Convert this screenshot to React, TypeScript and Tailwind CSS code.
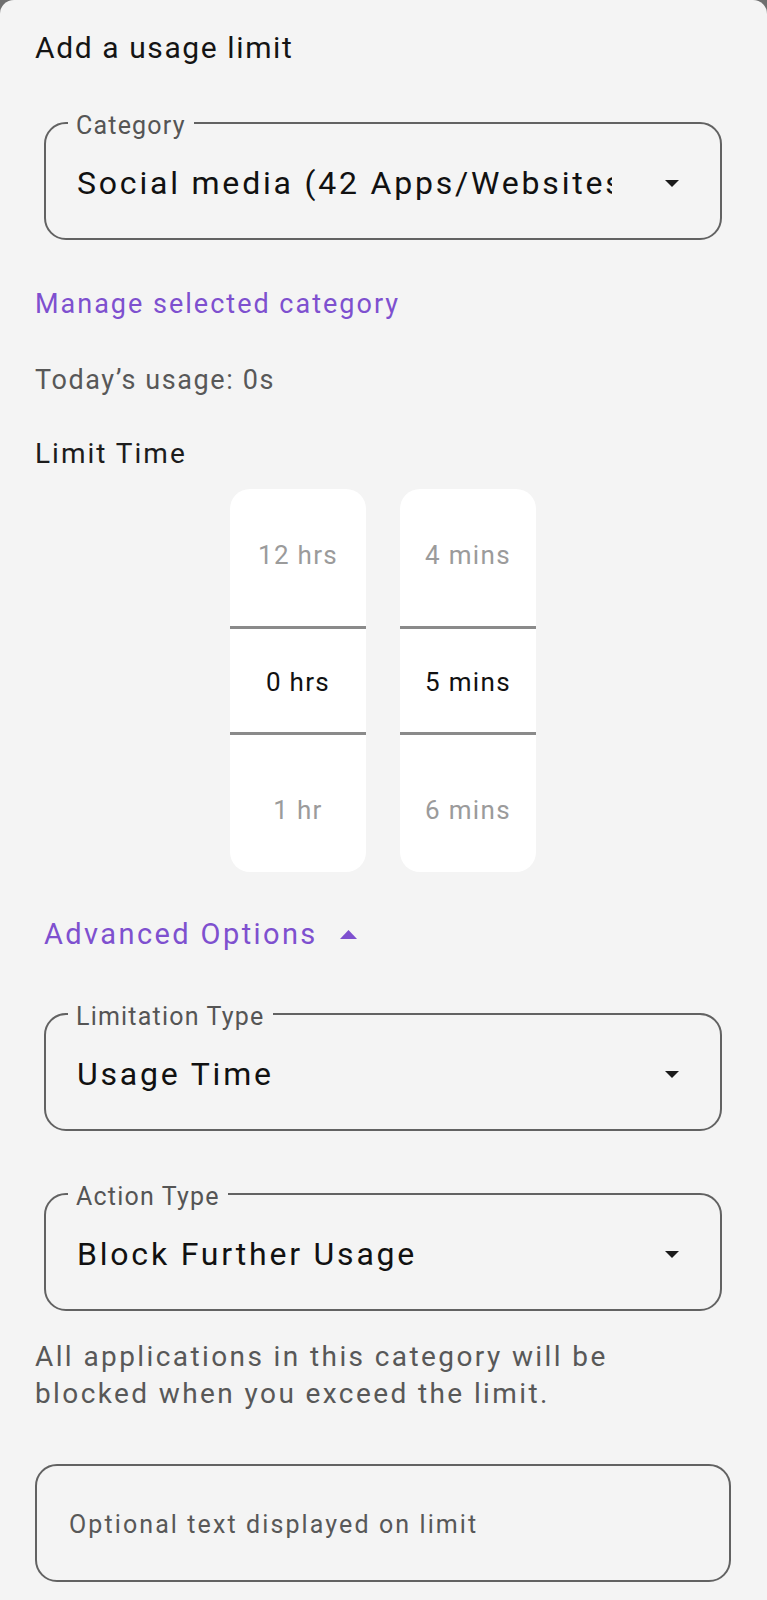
import React from 'react';

const FONT = { fontFamily: 'Roboto, "Noto Sans", sans-serif' };

function DownArrow() {
  return (
    <svg width="14" height="7" viewBox="0 0 14 7" className="shrink-0">
      <polygon points="0,0 14,0 7,7" fill="#1a1a1a" />
    </svg>
  );
}

function SelectField({ label, value }: { label: string; value: string }) {
  return (
    <div className="relative mx-[9px] h-[118px] rounded-[22px] border-2 border-[#626262]">
      <span className="absolute left-[22px] top-[2px] -translate-y-1/2 bg-[#f4f4f4] px-[8px] text-[25px] leading-[30px] tracking-[1.2px] text-[#555555]">
        {label}
      </span>
      <div className="flex h-full items-center pl-[31px] pr-[41px] pt-[4px]">
        <div className="mr-[53px] flex-1 overflow-hidden whitespace-nowrap text-[32px] leading-[40px] tracking-[2.8px] text-[#111111]">
          {value}
        </div>
        <DownArrow />
      </div>
    </div>
  );
}

function Wheel({ top, mid, bottom }: { top: string; mid: string; bottom: string }) {
  return (
    <div className="flex h-[383px] w-[136px] flex-col overflow-hidden rounded-[20px] bg-white text-[26px] tracking-[1.3px]">
      <div className="flex h-[137px] items-center justify-center pb-[5px] text-[#9b9b9b]">{top}</div>
      <div className="h-[3px] bg-[#8a8a8a]" />
      <div className="flex h-[103px] items-center justify-center pt-[3px] text-[#111111]">{mid}</div>
      <div className="h-[3px] bg-[#8a8a8a]" />
      <div className="flex h-[137px] items-center justify-center pt-[13px] text-[#9b9b9b]">{bottom}</div>
    </div>
  );
}

export default function App() {
  return (
    <div className="min-h-[1600px] bg-[#6f6f6f]" style={FONT}>
      <div className="min-h-[1600px] rounded-t-[14px] bg-[#f4f4f4] pl-[35px] pr-[36px] pt-[28px]">
        <h1 className="h-[40px] text-[30px] leading-[40px] tracking-[1.6px] text-[#141414]">Add a usage limit</h1>

        <div className="mt-[54px]">
          <SelectField label="Category" value="Social media (42 Apps/Websites)" />
        </div>

        <button className="mt-[46px] block h-[36px] text-[27px] leading-[36px] tracking-[2px] text-[#7e50cf]">
          Manage selected category
        </button>

        <p className="mt-[40px] h-[36px] text-[27px] leading-[36px] tracking-[1.6px] text-[#585858]">
          Today’s usage: 0s
        </p>

        <p className="mt-[38px] h-[36px] text-[28px] leading-[36px] tracking-[2px] text-[#1c1c1c]">Limit Time</p>

        {/* hours / minutes wheels */}
        <div className="mt-[17px] flex justify-center gap-[34px]">
          <Wheel top="12 hrs" mid="0 hrs" bottom="1 hr" />
          <Wheel top="4 mins" mid="5 mins" bottom="6 mins" />
        </div>

        <button className="mt-[44px] ml-[9px] flex h-[36px] items-center text-[29px] leading-[36px] tracking-[2.4px] text-[#7e50cf]">
          Advanced Options
          <svg width="17" height="9" viewBox="0 0 17 9" className="ml-[22px]">
            <polygon points="8.5,0 17,9 0,9" fill="#7e50cf" />
          </svg>
        </button>

        <div className="mt-[61px]">
          <SelectField label="Limitation Type" value="Usage Time" />
        </div>

        <div className="mt-[62px]">
          <SelectField label="Action Type" value="Block Further Usage" />
        </div>

        <p className="mt-[27px] max-w-[620px] text-[28px] leading-[37px] tracking-[2.4px] text-[#585858]">
          All applications in this category will be blocked when you exceed the limit.
        </p>

        <div className="mt-[52px] flex h-[118px] items-center rounded-[22px] border-2 border-[#626262] pl-[32px] pt-[4px]">
          <span className="text-[25px] leading-[32px] tracking-[2.1px] text-[#585858]">Optional text displayed on limit</span>
        </div>
      </div>
    </div>
  );
}
